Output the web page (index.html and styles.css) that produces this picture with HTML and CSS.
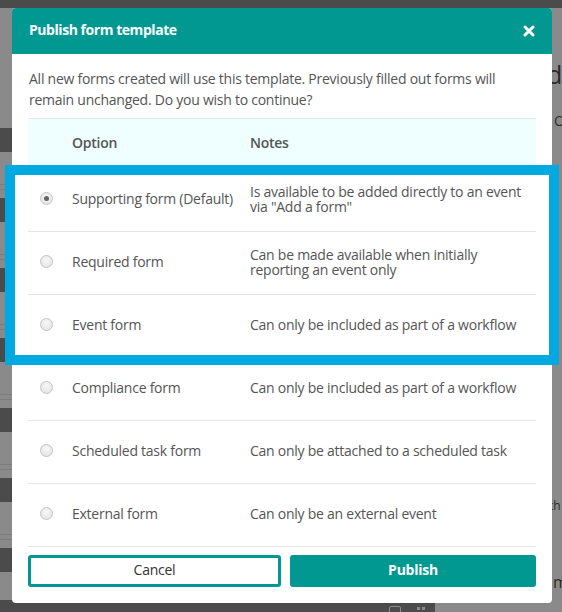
FILE: index.html
```html
<!DOCTYPE html>
<html>
<head>
<meta charset="utf-8">
<link rel="stylesheet" href="styles.css">
</head>
<body>
<div class="backdrop">
  <span class="bg-d">d</span>
  <span class="bg-o">O</span>
  <span class="bg-th">th</span>
  <span class="bg-me">me</span>
  <div class="bottom-bar">
    <span class="ico-sq"></span>
    <span class="ico-grid"></span>
  </div>
</div>
<div class="page">
  <div class="modal">
    <div class="modal-header">
      <span class="modal-title">Publish form template</span>
      <svg class="close" width="12" height="12" viewBox="0 0 12 12"><path d="M2 2 L10 10 M10 2 L2 10" stroke="#fff" stroke-width="3" stroke-linecap="round"/></svg>
    </div>
    <div class="modal-body">
      <p class="intro">All new forms created will use this template. Previously filled out forms will remain unchanged. Do you wish to continue?</p>
      <div class="table">
        <div class="row head">
          <div class="c-radio"></div>
          <div class="c-opt">Option</div>
          <div class="c-note">Notes</div>
        </div>
        <div class="row">
          <div class="c-radio"><span class="radio checked"></span></div>
          <div class="c-opt">Supporting form (Default)</div>
          <div class="c-note">Is available to be added directly to an event via "Add a form"</div>
        </div>
        <div class="row">
          <div class="c-radio"><span class="radio"></span></div>
          <div class="c-opt">Required form</div>
          <div class="c-note">Can be made available when initially reporting an event only</div>
        </div>
        <div class="row">
          <div class="c-radio"><span class="radio"></span></div>
          <div class="c-opt">Event form</div>
          <div class="c-note">Can only be included as part of a workflow</div>
        </div>
        <div class="row">
          <div class="c-radio"><span class="radio"></span></div>
          <div class="c-opt">Compliance form</div>
          <div class="c-note">Can only be included as part of a workflow</div>
        </div>
        <div class="row">
          <div class="c-radio"><span class="radio"></span></div>
          <div class="c-opt">Scheduled task form</div>
          <div class="c-note">Can only be attached to a scheduled task</div>
        </div>
        <div class="row">
          <div class="c-radio"><span class="radio"></span></div>
          <div class="c-opt">External form</div>
          <div class="c-note">Can only be an external event</div>
        </div>
      </div>
      <div class="footer">
        <button class="btn cancel">Cancel</button>
        <button class="btn publish">Publish</button>
      </div>
    </div>
  </div>
</div>
<div class="highlight"></div>
</body>
</html>
```

FILE: styles.css
```css
html, body {
  margin: 0;
  padding: 0;
}
body {
  width: 562px;
  height: 612px;
  overflow: hidden;
  position: relative;
  font-family: "Open Sans", "Liberation Sans", sans-serif;
  background: #8a8a8a;
}
.backdrop {
  position: absolute;
  inset: 0;
  background:
    linear-gradient(#4b4b4b, #4b4b4b) top / 100% 8px no-repeat,
    repeating-linear-gradient(180deg,
      #4b4b4b 0px, #4b4b4b 24px,
      #8a8a8a 24px, #8a8a8a 56px,
      #7c7c7c 56px, #7c7c7c 57px,
      #8a8a8a 57px, #8a8a8a 61px,
      #7c7c7c 61px, #7c7c7c 62px,
      #8a8a8a 62px, #8a8a8a 70px) 0 128px / 12px 100% no-repeat,
    linear-gradient(#8a8a8a, #8a8a8a);
}
.bg-d {
  position: absolute;
  left: 547px;
  top: 57px;
  font-size: 25px;
  color: #2a2a2a;
}
.bg-o {
  position: absolute;
  left: 554px;
  top: 111px;
  font-size: 14px;
  color: #2a2a2a;
}
.bg-th {
  position: absolute;
  left: 549px;
  top: 497px;
  font-size: 12px;
  color: #2a2a2a;
}
.bg-me {
  position: absolute;
  left: 553px;
  top: 571px;
  font-size: 16px;
  color: #2a2a2a;
}
.bottom-bar {
  position: absolute;
  left: 0;
  bottom: 0;
  width: 435px;
  height: 12px;
  background: #4b4b4b;
}
.ico-sq {
  position: absolute;
  left: 389px;
  top: 6px;
  width: 10px;
  height: 10px;
  border: 1px solid #8a8a8a;
  border-radius: 2px;
}
.ico-grid {
  position: absolute;
  left: 417px;
  top: 7px;
  width: 3px;
  height: 3px;
  background: #8a8a8a;
  box-shadow: 5px 0 #8a8a8a, 0 5px #8a8a8a, 5px 5px #8a8a8a;
}
.page {
  position: relative;
  padding: 8px 0 0 12px;
}
.modal {
  width: 540px;
  height: 595px;
  background: #fff;
  border-radius: 4px;
  overflow: hidden;
  display: flex;
  flex-direction: column;
}
.modal-header {
  height: 46px;
  background: #009891;
  display: flex;
  align-items: center;
  justify-content: space-between;
  padding: 0 17px 3px 17px;
  box-sizing: border-box;
}
.modal-title {
  color: #fff;
  font-size: 14px;
  font-weight: 700;
  letter-spacing: -0.45px;
}
.close {
  display: block;
  margin-top: 3px;
}
.modal-body {
  padding: 14px 16px 0 16px;
}
.intro {
  margin: 0 0 8px 1px;
  font-size: 14px;
  line-height: 21px;
  color: #555;
  letter-spacing: -0.25px;
}
.table {
  width: 508px;
  border-top: 1px solid #e4e8e8;
}
.row {
  display: grid;
  grid-template-columns: 44px 178px 1fr;
  align-items: center;
  height: 63px;
  box-sizing: border-box;
  padding-bottom: 3px;
  border-bottom: 1px solid #e5e5e5;
  font-size: 14px;
  color: #555;
  letter-spacing: -0.25px;
}
.row.head {
  height: 50px;
  background: #effefe;
  border-bottom: none;
  font-weight: 600;
  color: #555;
}
.c-radio {
  display: flex;
  align-items: center;
  padding-left: 12px;
}
.c-note {
  line-height: 15px;
}
.radio {
  width: 11px;
  height: 11px;
  border-radius: 50%;
  border: 1px solid #c2c2c2;
  background: radial-gradient(circle at 50% 35%, #f6f6f6 0%, #e2e2e2 100%);
  display: flex;
  align-items: center;
  justify-content: center;
}
.radio.checked::after {
  content: "";
  width: 5px;
  height: 5px;
  border-radius: 50%;
  background: #666;
}
.footer {
  display: flex;
  gap: 9px;
  padding-top: 8px;
}
.btn {
  height: 32px;
  border-radius: 3px;
  font-family: "Open Sans", "Liberation Sans", sans-serif;
  font-size: 14px;
  box-sizing: border-box;
  cursor: pointer;
  padding: 0 0 3px 0;
  letter-spacing: -0.25px;
}
.cancel {
  width: 253px;
  background: #fff;
  border: 3px solid #009891;
  color: #333;
}
.publish {
  width: 246px;
  background: #009891;
  border: none;
  color: #fff;
  font-weight: 700;
}
.highlight {
  position: absolute;
  left: 5px;
  top: 165px;
  width: 554px;
  height: 200px;
  box-sizing: border-box;
  border: 10px solid #00a9e0;
}
```
